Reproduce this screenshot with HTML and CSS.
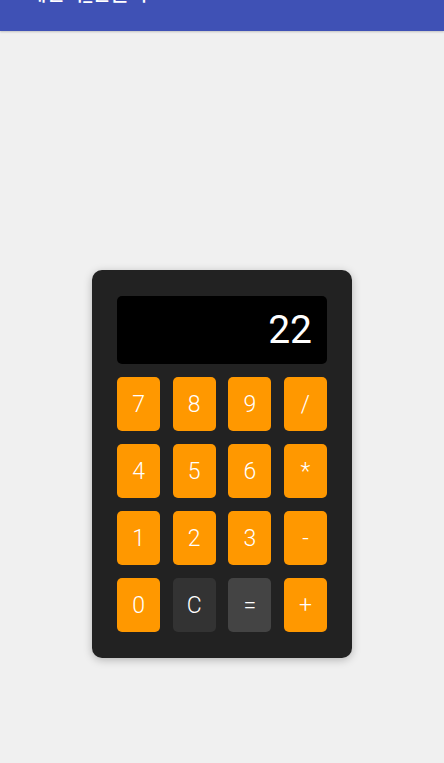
FILE: index.html
```html
<!DOCTYPE html>
<html lang="ko">
<head>
  <meta charset="UTF-8">
  <meta name="viewport" content="width=device-width, initial-scale=1.0">
  <title>계산기</title>
  <link rel="stylesheet" href="styles.css">
</head>
<body>
  <header class="appbar">
    <h1 class="title">계산기_만들기</h1>
  </header>

  <main>
    <div class="calc">
      <div class="display">22</div>
      <div class="keys">
        <button class="key">7</button>
        <button class="key">8</button>
        <button class="key">9</button>
        <button class="key">/</button>
        <button class="key">4</button>
        <button class="key">5</button>
        <button class="key">6</button>
        <button class="key">*</button>
        <button class="key">1</button>
        <button class="key">2</button>
        <button class="key">3</button>
        <button class="key">-</button>
        <button class="key">0</button>
        <button class="key clear">C</button>
        <button class="key equals">=</button>
        <button class="key">+</button>
      </div>
    </div>
  </main>
</body>
</html>
```

FILE: styles.css
```css
:root {
  --bg: #f0f0f0;
  --bar: #3f51b5;
  --panel: #222222;
  --orange: #ff9800;
  --clear: #333333;
  --equals: #444444;
}
* { margin: 0; padding: 0; box-sizing: border-box; }
body {
  background: var(--bg);
  font-family: Roboto, "Noto Sans CJK KR", sans-serif;
  min-height: 100vh;
}
.appbar {
  height: 31px;
  background: var(--bar);
  overflow: hidden;
  padding-left: 28px;
  box-shadow: 0 1px 2px rgba(0,0,0,0.2);
}
.title {
  color: #fff;
  font-size: 20px;
  font-weight: 500;
  line-height: 24px;
  margin-top: -18px;
}
main {
  display: flex;
  justify-content: center;
  padding: 239px 0 0 0;
}
.calc {
  width: 260px;
  background: var(--panel);
  border-radius: 10px;
  padding: 26px 25px;
  box-shadow: 0 2px 8px rgba(0,0,0,0.25);
}
.display {
  height: 68px;
  background: #000;
  color: #fff;
  border-radius: 5px;
  font-size: 39px;
  text-align: right;
  padding: 11px 15px 0 0;
  line-height: 46px;
  margin-bottom: 13px;
}
.keys {
  display: grid;
  grid-template-columns: repeat(4, 1fr);
  grid-auto-rows: 54px;
  column-gap: 12.5px;
  row-gap: 13px;
}
.key {
  background: var(--orange);
  color: #fff;
  border: none;
  border-radius: 5px;
  font-family: Roboto, sans-serif;
  font-size: 23px;
  font-weight: 300;
}
.clear { background: var(--clear); }
.equals { background: var(--equals); }
```
